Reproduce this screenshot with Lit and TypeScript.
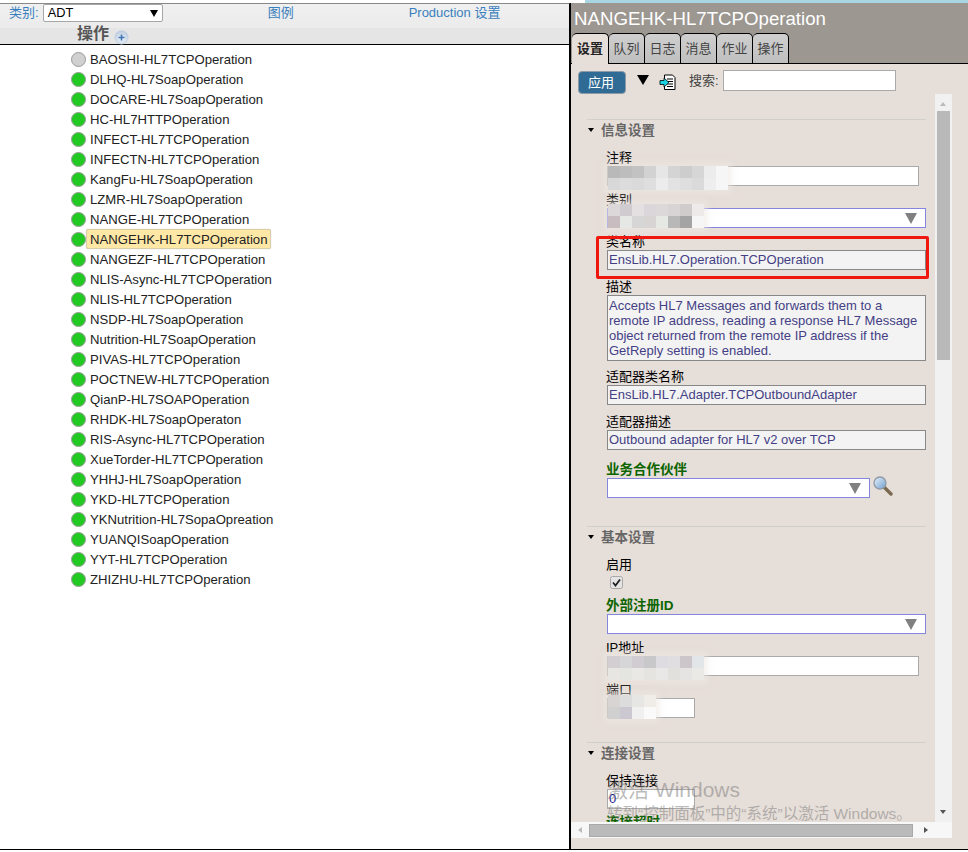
import { LitElement, css, html } from "lit";
import { customElement } from "lit/decorators.js";

const OPERATIONS = [
  "BAOSHI-HL7TCPOperation",
  "DLHQ-HL7SoapOperation",
  "DOCARE-HL7SoapOperation",
  "HC-HL7HTTPOperation",
  "INFECT-HL7TCPOperation",
  "INFECTN-HL7TCPOperation",
  "KangFu-HL7SoapOperation",
  "LZMR-HL7SoapOperation",
  "NANGE-HL7TCPOperation",
  "NANGEHK-HL7TCPOperation",
  "NANGEZF-HL7TCPOperation",
  "NLIS-Async-HL7TCPOperation",
  "NLIS-HL7TCPOperation",
  "NSDP-HL7SoapOperation",
  "Nutrition-HL7SoapOperation",
  "PIVAS-HL7TCPOperation",
  "POCTNEW-HL7TCPOperation",
  "QianP-HL7SOAPOperation",
  "RHDK-HL7SoapOperaton",
  "RIS-Async-HL7TCPOperation",
  "XueTorder-HL7TCPOperation",
  "YHHJ-HL7SoapOperation",
  "YKD-HL7TCPOperation",
  "YKNutrition-HL7SopaOpreation",
  "YUANQISoapOperation",
  "YYT-HL7TCPOperation",
  "ZHIZHU-HL7TCPOperation",
];

const TABS = ["设置", "队列", "日志", "消息", "作业", "操作"];

// colours of the mosaic patches that hide values in the reference
const PATCH_NOTE = [
  ["#b9b9b9", "#bdbdbd", "#c2c2c2", "#d2d2d2", "#e6e6e6", "#d4d4d4", "#cdcdcd", "#d6d6d6", "#ececec", "#f6f6f6"],
  ["#d8d8d8", "#dcdcdc", "#dadada", "#dedede", "#ececec", "#e2e2e2", "#dedede", "#dadada", "#eeeeee", "#f6f6f6"],
];
const PATCH_CATEGORY = [
  ["#dcd8da", "#cfcbce", "#e4dfe1", "#dbd6d9", "#dcd8da", "#d8d4d6", "#d0cccc", "#efeaea"],
  ["#c8bcc0", "#e6e8e6", "#d6d6d6", "#d8d4d4", "#e6e8e4", "#b8b8b8", "#a4a4a4", "#f6f6f6"],
];
const PATCH_IP = [
  ["#d2ced2", "#d6d6d8", "#d0ccd2", "#c8c8ca", "#dedce0", "#e0dee0", "#ccc6ca", "#e2e6e8"],
  ["#e8e6e2", "#e4e4e0", "#eae8e4", "#e6e4e0", "#eae8e6", "#e2e0dc", "#e6e4e2", "#ebe9e6"],
];
const PATCH_PORT = [
  ["#d8d4d4", "#dcdcdc", "#e6e6e4", "#f0ece8"],
  ["#d0d0d0", "#ccc8d2", "#f0f0f0", "#fafafa"],
];

@customElement("app-root")
export class AppRoot extends LitElement {
  static override styles = css`
    :host {
      display: block;
      width: 968px;
      height: 852px;
      overflow: hidden;
      background: #fff;
      font-family: "Liberation Sans", "Noto Sans CJK SC", sans-serif;
      font-size: 13px;
      color: #000;
    }
    * {
      box-sizing: border-box;
    }
    .strip {
      display: flex;
      height: 3px;
    }
    .strip .white {
      width: 585px;
    }
    .strip .blue {
      flex: 1;
      background: #a9d6e2;
    }
    .main {
      display: flex;
      height: 847px;
      border-bottom: 1px solid #000;
    }

    /* left side */
    .left {
      width: 570px;
      border-top: 1px solid #888;
      border-right: 1px solid #000;
    }
    .head {
      height: 41px;
      border-bottom: 1.5px solid #000;
      background: #e5e5e5;
    }
    .head-top {
      display: flex;
      align-items: flex-start;
      height: 24px;
      padding-left: 9px;
      background: linear-gradient(#f0f0f0, #ebebeb);
      color: #3a7fbd;
      font-size: 13px;
      line-height: 18px;
    }
    .picker {
      display: flex;
      align-items: center;
      justify-content: space-between;
      width: 120px;
      height: 18px;
      margin-left: 4px;
      padding: 0 4px;
      border: 1px solid #a6a6a6;
      border-radius: 2px;
      background: #fff;
      color: #000;
      font-size: 12.8px;
    }
    .picker i {
      width: 0;
      height: 0;
      border-left: 4px solid transparent;
      border-right: 4px solid transparent;
      border-top: 7px solid #000;
    }
    .legend {
      margin-left: 105px;
    }
    .prod {
      margin-left: 115px;
    }
    .head-sub {
      display: flex;
      align-items: center;
      gap: 5px;
      height: 16px;
      padding: 0 0 4px 77px;
      color: #555;
      font-size: 16px;
      line-height: 16px;
      font-weight: 700;
    }
    .head-sub svg {
      margin-top: 6px;
    }
    .list {
      padding: 4px 0 0 71px;
      font-size: 13.15px;
    }
    .op {
      display: flex;
      align-items: center;
      height: 20px;
      color: #222;
    }
    .dot {
      width: 15px;
      height: 15px;
      border-radius: 50%;
      border: 1px solid #9a9a9a;
      background: #22c922;
      margin-right: 4px;
    }
    .dot.off {
      background: #d0d0d0;
    }
    .op.sel .name {
      height: 20px;
      margin-left: -4px;
      padding: 0 3px;
      line-height: 19px;
      border: 1px solid #d8cfa8;
      border-radius: 2px;
      background: #ffe8a6;
      box-shadow: 0 0 1px #bbb;
    }

    /* right side */
    .right {
      flex: 1;
      display: flex;
      flex-direction: column;
      position: relative;
      border-left: 1px solid #000;
      background: #e6ded8;
    }
    .title {
      height: 30px;
      padding: 5px 0 0 3px;
      background: #9c9790;
      color: #fff;
      font-size: 18.67px;
      line-height: 22px;
    }
    .tabs {
      display: flex;
      height: 31px;
      padding-left: 1px;
      background: #9c9790;
      border-bottom: 1px solid #000;
    }
    .tab {
      width: 36px;
      height: 31px;
      padding-top: 6px;
      text-align: center;
      line-height: 18px;
      border: 1px solid #000;
      border-left: 0;
      border-radius: 5px 5px 0 0;
      background: linear-gradient(#cfcfcf, #bfbfbf);
      color: #444;
      font-size: 13px;
    }
    .tab.on {
      width: 37px;
      border-bottom: 0;
      background: #e6ded8;
      color: #222;
      font-weight: 700;
    }
    .tools {
      display: flex;
      align-items: flex-start;
      height: 30px;
      padding: 5px 0 0 7px;
    }
    .apply {
      width: 48px;
      height: 23px;
      margin-top: 2px;
      padding-right: 2px;
      text-align: center;
      line-height: 21px;
      border: 1px solid #8d9aa5;
      border-radius: 4px;
      background: #2f6b94;
      color: #fff;
      font-size: 13px;
    }
    .drop {
      width: 0;
      height: 0;
      margin: 6px 0 0 11px;
      border-left: 6px solid transparent;
      border-right: 6px solid transparent;
      border-top: 10px solid #000;
    }
    .tools svg {
      margin: 5px 0 0 10px;
    }
    .tools label {
      margin: 3px 0 0 13px;
      color: #444;
      font-size: 13px;
      line-height: 18px;
    }
    .search {
      width: 173px;
      height: 21px;
      margin: 1px 0 0 4px;
      border: 1px solid #aaa;
      background: #fff;
    }

    .pane {
      flex: 0 0 744px;
      display: flex;
      flex-direction: column;
      width: 381px;
      height: 744px;
      min-height: 0;
    }
    .pane-top {
      flex: 1;
      display: flex;
      min-height: 0;
    }
    .scroll {
      flex: 1;
      overflow: hidden;
      padding: 25px 9px 0 16px;
    }
    .sec {
      border-top: 1px solid #d2d0cc;
      margin-bottom: 28px;
    }
    .sec.tight {
      margin-bottom: 24px;
    }
    .sec-title {
      display: flex;
      align-items: center;
      height: 18px;
      color: #666;
      font-weight: 700;
      font-size: 13.5px;
    }
    .sec-title i {
      width: 0;
      height: 0;
      margin: 1px 7px 0 1px;
      border-left: 3.5px solid transparent;
      border-right: 3.5px solid transparent;
      border-top: 4px solid #000;
    }
    .fields {
      padding: 6px 0 0 20px;
    }
    .fld label {
      display: block;
      height: 16px;
      margin-left: -1px;
      line-height: 15px;
      white-space: nowrap;
    }
    .fld label.req {
      color: #0d6400;
      font-weight: 700;
      font-size: 13.5px;
    }
    .box {
      position: relative;
      height: 20px;
      width: 312px;
      border: 1px solid #aaa;
      background: #fff;
      line-height: 18px;
      padding-left: 1px;
    }
    .box.short {
      width: 88px;
      color: #1a1a8c;
    }
    .combo {
      display: flex;
      align-items: center;
      justify-content: flex-end;
      width: 319px;
      padding-right: 8px;
      border-color: #8585e0;
    }
    .combo.narrow {
      width: 263px;
    }
    .combo i {
      width: 0;
      height: 0;
      border-left: 6px solid transparent;
      border-right: 6px solid transparent;
      border-top: 11px solid #808080;
    }
    .ro {
      width: 319px;
      height: 20px;
      padding: 0 1px;
      border: 1px solid #888;
      background: #f3f3f3;
      color: #443f85;
      line-height: 18px;
      white-space: nowrap;
    }
    .ro.multi {
      height: 66px;
      padding-top: 2px;
      line-height: 15px;
    }
    .gap6 {
      margin-top: 6px;
    }
    .gap8 {
      margin-top: 8px;
    }
    .gap9 {
      margin-top: 9px;
    }
    .gap12 {
      margin-top: 12px;
    }
    .with-icon {
      display: flex;
      align-items: flex-start;
    }
    .with-icon svg {
      margin: -3px 0 0 2px;
    }
    .check {
      display: block;
      margin: 3px 0 9px 3px;
    }
    .patch {
      position: absolute;
      display: grid;
      grid-auto-rows: 12px;
      box-shadow: 0 0 5px 4px rgba(236, 232, 228, 0.55);
    }

    .vbar {
      position: relative;
      flex: 0 0 17px;
      background: #f1f1f1;
    }
    .thumb-v {
      position: absolute;
      top: 17px;
      left: 2px;
      width: 13px;
      height: 249px;
      background: #b9b9b9;
    }
    .arrow {
      position: absolute;
      width: 0;
      height: 0;
    }
    .arrow.up {
      top: 8px;
      left: 5px;
      border-left: 3.5px solid transparent;
      border-right: 3.5px solid transparent;
      border-bottom: 4px solid #bbb;
    }
    .arrow.down {
      bottom: 8px;
      left: 5px;
      border-left: 3.5px solid transparent;
      border-right: 3.5px solid transparent;
      border-top: 4px solid #555;
    }
    .hbar {
      display: flex;
      align-items: center;
      flex: 0 0 16px;
      padding: 0 16px 0 7px;
      background: #f7f7f7;
    }
    .thumb-h {
      width: 324px;
      height: 13px;
      margin-left: 7px;
      border: 1px solid #a9a9a9;
      background: #bababa;
    }
    .hbar .tri-l {
      width: 0;
      height: 0;
      border-top: 3.5px solid transparent;
      border-bottom: 3.5px solid transparent;
      border-right: 4px solid #bbb;
    }
    .hbar .tri-r {
      width: 0;
      height: 0;
      margin-left: auto;
      margin-right: 8px;
      border-top: 3.5px solid transparent;
      border-bottom: 3.5px solid transparent;
      border-left: 4px solid #555;
    }

    /* overlays on top of the form */
    .marker {
      position: absolute;
      left: 25px;
      top: 233px;
      width: 333px;
      height: 43px;
      border: 3px solid #f0170f;
      border-radius: 2px;
      pointer-events: none;
    }
    .mark-1,
    .mark-2 {
      position: absolute;
      left: 36px;
      color: rgba(120, 120, 120, 0.5);
      white-space: nowrap;
      pointer-events: none;
    }
    .mark-1 {
      top: 774px;
      font-size: 21px;
      line-height: 26px;
    }
    .mark-2 {
      top: 802px;
      font-size: 15.5px;
      line-height: 18px;
    }
  `;

  private patch(colours: string[][], left: number, top: number) {
    return html`<div
      class="patch"
      style="left:${left}px;top:${top}px;grid-template-columns:repeat(${colours[0].length},12px)"
    >
      ${colours.flat().map((c) => html`<span style="background:${c}"></span>`)}
    </div>`;
  }

  private renderOp(name: string, i: number) {
    const selected = name.startsWith("NANGEHK");
    return html`<div class="op ${selected ? "sel" : ""}">
      <span class="dot ${i === 0 ? "off" : ""}"></span>
      <span class="name">${name}</span>
    </div>`;
  }

  private renderLeft() {
    return html`<div class="left">
      <div class="head">
        <div class="head-top">
          <span>类别:</span>
          <div class="picker"><span>ADT</span><i></i></div>
          <span class="legend">图例</span>
          <span class="prod">Production 设置</span>
        </div>
        <div class="head-sub">
          <span>操作</span>
          <svg width="15" height="15" viewBox="0 0 15 15">
            <defs>
              <radialGradient id="plus" cx="0.5" cy="0.6" r="0.6">
                <stop offset="0" stop-color="#f2f6fb" />
                <stop offset="1" stop-color="#b8c8dc" />
              </radialGradient>
            </defs>
            <circle cx="7.5" cy="7.5" r="7" fill="url(#plus)" />
            <path d="M7.5 4.5v6M4.5 7.5h6" stroke="#3f74b5" stroke-width="1.6" />
          </svg>
        </div>
      </div>
      <div class="list">${OPERATIONS.map((n, i) => this.renderOp(n, i))}</div>
    </div>`;
  }

  private renderForm() {
    return html`
      <div class="sec">
        <div class="sec-title"><i></i>信息设置</div>
        <div class="fields">
          <div class="fld gap6">
            <label>注释</label>
            <div class="box">${this.patch(PATCH_NOTE, 0, -1)}</div>
          </div>
          <div class="fld gap6">
            <label>类别</label>
            <div class="box combo"><i></i>${this.patch(PATCH_CATEGORY, 0, -5)}</div>
          </div>
          <div class="fld gap6">
            <label>类名称</label>
            <div class="ro">EnsLib.HL7.Operation.TCPOperation</div>
          </div>
          <div class="fld gap9">
            <label>描述</label>
            <div class="ro multi">
              Accepts HL7 Messages and forwards them to a<br />
              remote IP address, reading a response HL7 Message<br />
              object returned from the remote IP address if the<br />
              GetReply setting is enabled.
            </div>
          </div>
          <div class="fld gap8">
            <label>适配器类名称</label>
            <div class="ro">EnsLib.HL7.Adapter.TCPOutboundAdapter</div>
          </div>
          <div class="fld gap9">
            <label>适配器描述</label>
            <div class="ro">Outbound adapter for HL7 v2 over TCP</div>
          </div>
          <div class="fld gap12">
            <label class="req">业务合作伙伴</label>
            <div class="with-icon">
              <div class="box combo narrow"><i></i></div>
              ${this.renderLens()}
            </div>
          </div>
        </div>
      </div>
      <div class="sec tight">
        <div class="sec-title"><i></i>基本设置</div>
        <div class="fields">
          <div class="fld gap6">
            <label>启用</label>
            ${this.renderCheck()}
          </div>
          <div class="fld">
            <label class="req">外部注册ID</label>
            <div class="box combo"><i></i></div>
          </div>
          <div class="fld gap6">
            <label>IP地址</label>
            <div class="box">${this.patch(PATCH_IP, 0, -1)}</div>
          </div>
          <div class="fld gap6">
            <label>端口</label>
            <div class="box short">${this.patch(PATCH_PORT, 0, -4)}</div>
          </div>
        </div>
      </div>
      <div class="sec">
        <div class="sec-title"><i></i>连接设置</div>
        <div class="fields">
          <div class="fld gap6">
            <label>保持连接</label>
            <div class="box short">0</div>
          </div>
          <div class="fld gap6">
            <label class="req">连接超时</label>
          </div>
        </div>
      </div>
    `;
  }

  private renderLens() {
    return html`<svg width="21" height="22" viewBox="0 0 21 22">
      <defs>
        <linearGradient id="glass" x1="0" y1="0" x2="1" y2="1">
          <stop offset="0" stop-color="#e8f2fa" />
          <stop offset="1" stop-color="#6f9ed0" />
        </linearGradient>
      </defs>
      <path d="M12 12l7 7" stroke="#7c6a50" stroke-width="3.4" stroke-linecap="round" />
      <circle cx="8" cy="8" r="6" fill="url(#glass)" stroke="#8f9aa6" stroke-width="1.3" />
    </svg>`;
  }

  private renderCheck() {
    return html`<svg class="check" width="13" height="13" viewBox="0 0 13 13">
      <rect x="0.5" y="0.5" width="12" height="12" rx="2" fill="#e4e4e4" stroke="#a8a8a8" />
      <path d="M3 6.500l2.500 3L10 3.500" fill="none" stroke="#222" stroke-width="1.8" />
    </svg>`;
  }

  private renderRight() {
    return html`<div class="right">
      <div class="title">NANGEHK-HL7TCPOperation</div>
      <div class="tabs">
        ${TABS.map((t, i) => html`<div class="tab ${i === 0 ? "on" : ""}">${t}</div>`)}
      </div>
      <div class="tools">
        <div class="apply">应用</div>
        <span class="drop"></span>
        <svg width="17" height="17" viewBox="0 0 17 17">
          <path d="M5.500 1h8l2.500 2.500V15.500H5.500z" fill="#fff" stroke="#000" />
          <path d="M8 5h6M8 7.500h6M8 10h6M8 12.500h6" stroke="#000" />
          <path d="M1 6.500h4V4l5 4.500-5 4.500v-2.500H1z" fill="#19d4e6" stroke="#000" stroke-width="0.8" />
        </svg>
        <label>搜索:</label>
        <div class="search"></div>
      </div>
      <div class="pane">
        <div class="pane-top">
          <div class="scroll">${this.renderForm()}</div>
          <div class="vbar">
            <span class="arrow up"></span>
            <div class="thumb-v"></div>
            <span class="arrow down"></span>
          </div>
        </div>
        <div class="hbar">
          <span class="tri-l"></span>
          <div class="thumb-h"></div>
          <span class="tri-r"></span>
        </div>
      </div>
      <div class="marker"></div>
      <div class="mark-1">激活 Windows</div>
      <div class="mark-2">转到“控制面板”中的“系统”以激活 Windows。</div>
    </div>`;
  }

  override render() {
    return html`
      <div class="strip"><div class="white"></div><div class="blue"></div></div>
      <div class="main">${this.renderLeft()} ${this.renderRight()}</div>
    `;
  }
}

declare global {
  interface HTMLElementTagNameMap {
    "app-root": AppRoot;
  }
}
